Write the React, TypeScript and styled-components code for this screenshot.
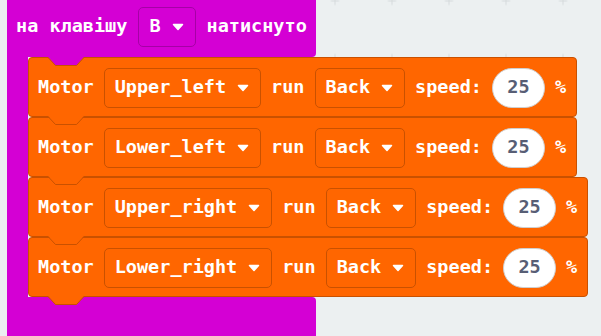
import React from "react";
import styled, { createGlobalStyle } from "styled-components";

const ORANGE = "#ff6600";
const ORANGE_DARK = "#c95100";
const MAGENTA = "#d400d4";
const MAGENTA_DARK = "#a600a6";

const GlobalStyle = createGlobalStyle`
  html, body {
    margin: 0;
    padding: 0;
  }
  body {
    background: #ecf0f1;
    font-family: "DejaVu Sans Mono", "Liberation Mono", monospace;
    overflow: hidden;
  }
`;

const Workspace = styled.div`
  position: relative;
  width: 601px;
  height: 336px;
  overflow: hidden;
  box-sizing: border-box;
  padding-left: 7px;
  background: #ecf0f1;
`;

const Grid = styled.svg`
  position: absolute;
  inset: 0;
  pointer-events: none;
`;

const CBlock = styled.div`
  position: relative;
  z-index: 1;
  display: flex;
  flex-direction: column;
  align-items: flex-start;
  width: 309px;
  color: #fff;
  font-size: 18.5px;
  font-weight: bold;
  white-space: nowrap;
`;

const Hat = styled.div`
  display: flex;
  align-items: center;
  gap: 11px;
  box-sizing: border-box;
  width: 309px;
  height: 57px;
  padding: 0 10px 4px 9px;
  background: ${MAGENTA};
  border-bottom-right-radius: 4px;
`;

const Mouth = styled.div`
  display: flex;
  width: max-content;
`;

const Wall = styled.div`
  flex: none;
  width: 21px;
  background: ${MAGENTA};
`;

const Stack = styled.div`
  display: flex;
  flex-direction: column;
  align-items: flex-start;
`;

const Arm = styled.div`
  width: 309px;
  height: 60px;
  background: ${MAGENTA};
  border-top-right-radius: 4px;
`;

const Block = styled.div`
  position: relative;
  display: flex;
  align-items: center;
  gap: 10px;
  box-sizing: border-box;
  height: 60px;
  padding: 1px 10px 0 9px;
  background: ${ORANGE};
  border: 1px solid ${ORANGE_DARK};
  border-radius: 4px;
`;

const Label = styled.span`
  flex: none;
  line-height: 1;
`;

const Dropdown = styled.div<{ $edge: string }>`
  flex: none;
  display: flex;
  align-items: center;
  gap: 11px;
  box-sizing: border-box;
  height: 40px;
  padding: 0 11px 0 10px;
  border: 1px solid ${(p) => p.$edge};
  border-radius: 5px;
  line-height: 1;
`;

const NumberField = styled.div`
  flex: none;
  display: flex;
  align-items: center;
  justify-content: center;
  box-sizing: border-box;
  width: 53px;
  height: 40px;
  border-radius: 20px;
  background: #fff;
  border: 1px solid #cfcfcf;
  color: #575e75;
  line-height: 1;
`;

const Caret = styled.svg`
  flex: none;
  display: block;
`;

const Tab = styled.svg<{ $top: string }>`
  position: absolute;
  left: 19px;
  top: ${(p) => p.$top};
  z-index: 1;
  overflow: visible;
`;

const Arrow = () => (
  <Caret width="12" height="8" viewBox="0 0 12 8">
    <path
      d="M1.5 1.5 H10.5 L6 6.5 Z"
      fill="#fff"
      stroke="#fff"
      strokeWidth="1.5"
      strokeLinejoin="round"
    />
  </Caret>
);

// the little puzzle tab; fill is the block colour it belongs to
const TabShape = ({ fill, top }: { fill: string; top: string }) => (
  <Tab $top={top} width="36" height="10" viewBox="0 0 36 10">
    <path d="M0 0 H36 L28 9 H8 Z" fill={fill} />
    <path
      d="M0 0.5 L7.5 8.5 H28.5 L36 0.5"
      fill="none"
      stroke={ORANGE_DARK}
      strokeWidth="1"
      strokeLinejoin="round"
    />
  </Tab>
);

interface MotorRow {
  motor: string;
}

const rows: MotorRow[] = [
  { motor: "Upper_left" },
  { motor: "Lower_left" },
  { motor: "Upper_right" },
  { motor: "Lower_right" },
];

const MotorBlock = ({ motor, first }: { motor: string; first: boolean }) => (
  <Block>
    {first && <TabShape fill={MAGENTA} top="-1px" />}
    <Label>Motor</Label>
    <Dropdown $edge={ORANGE_DARK}>
      <span>{motor}</span>
      <Arrow />
    </Dropdown>
    <Label>run</Label>
    <Dropdown $edge={ORANGE_DARK}>
      <span>Back</span>
      <Arrow />
    </Dropdown>
    <Label>speed:</Label>
    <NumberField>25</NumberField>
    <Label>%</Label>
    <TabShape fill={ORANGE} top="100%" />
  </Block>
);

export default function App() {
  return (
    <>
      <GlobalStyle />
      <Workspace>
        <Grid width="601" height="336">
          <defs>
            <pattern
              id="grid"
              x="306.5"
              y="-27.5"
              width="57"
              height="57"
              patternUnits="userSpaceOnUse"
            >
              <path
                d="M24.5 28.5 H32.5 M28.5 24.5 V32.5"
                stroke="#d5dadc"
                strokeWidth="1"
              />
            </pattern>
          </defs>
          <rect width="601" height="336" fill="url(#grid)" />
        </Grid>
        <CBlock>
          <Hat>
            <Label>на клавішу</Label>
            <Dropdown $edge={MAGENTA_DARK}>
              <span>B</span>
              <Arrow />
            </Dropdown>
            <Label>натиснуто</Label>
          </Hat>
          <Mouth>
            <Wall />
            <Stack>
              {rows.map((r, i) => (
                <MotorBlock key={r.motor} motor={r.motor} first={i === 0} />
              ))}
            </Stack>
          </Mouth>
          <Arm />
        </CBlock>
      </Workspace>
    </>
  );
}
